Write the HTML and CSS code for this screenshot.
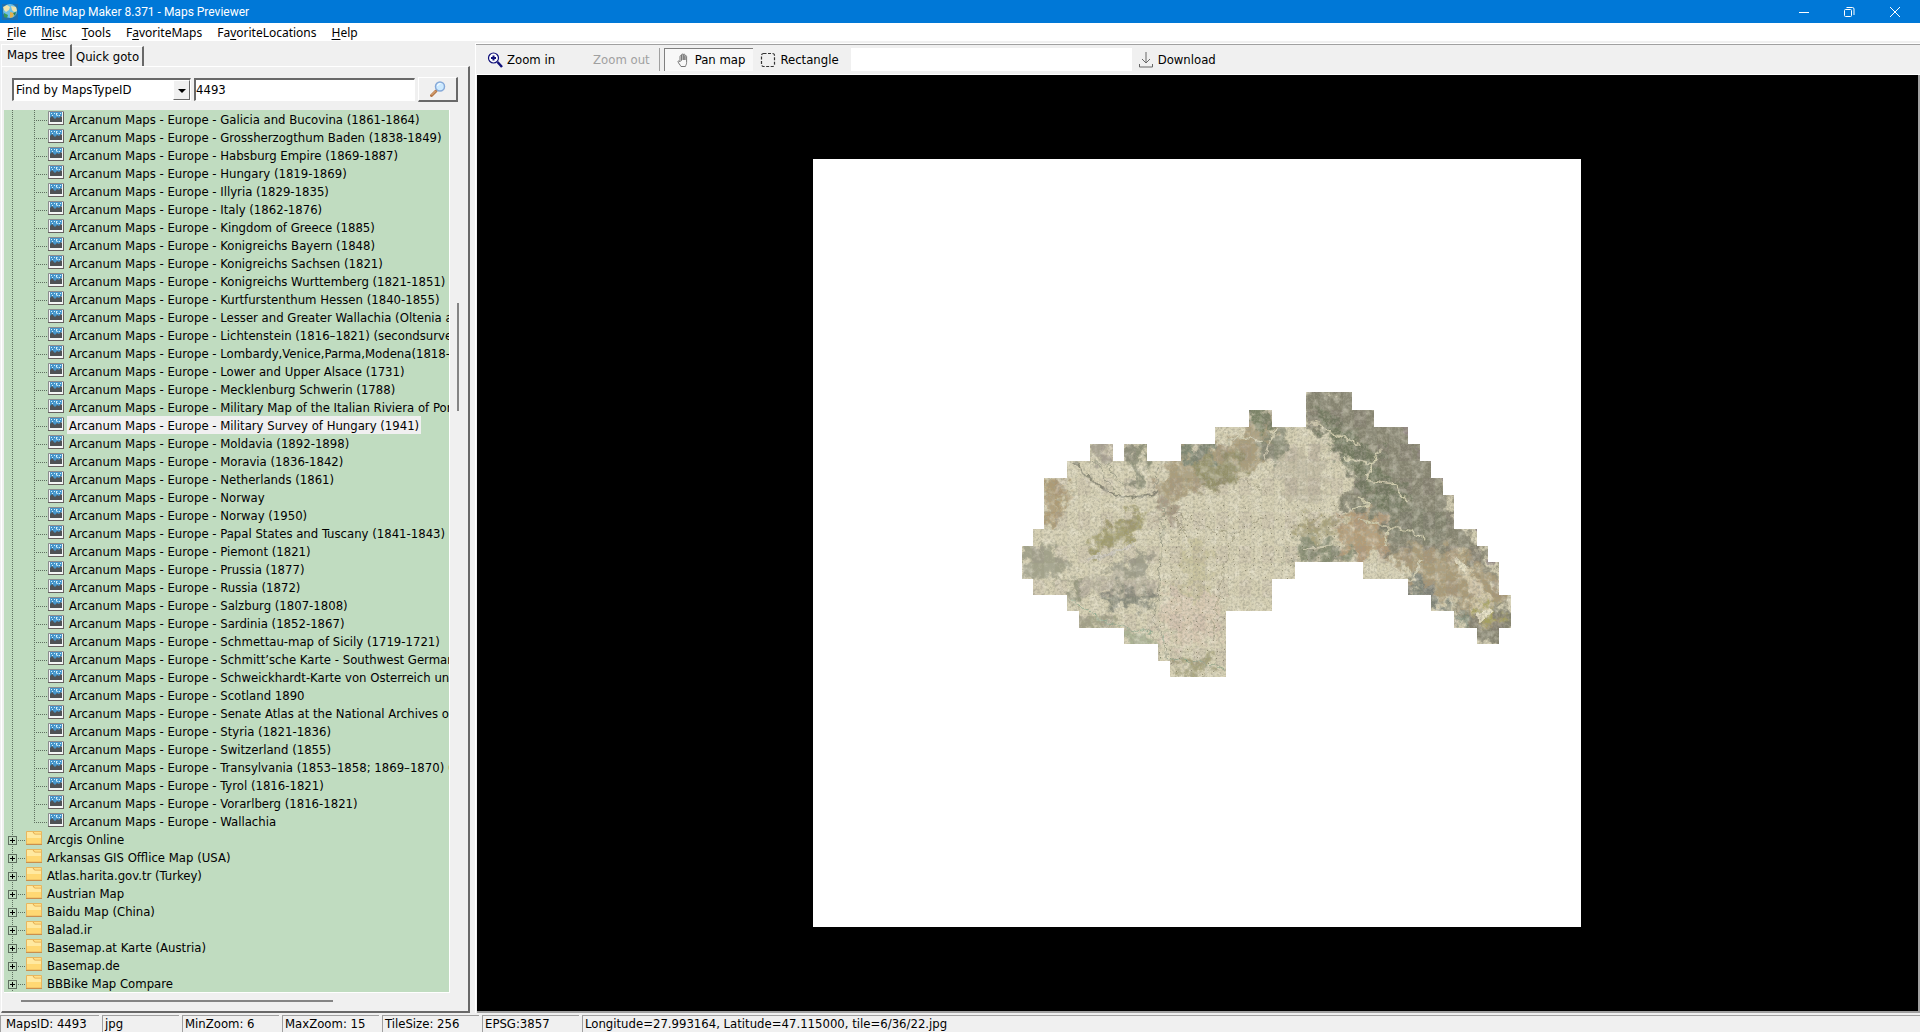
FILE: index.html
```html
<!DOCTYPE html>
<html lang="en">
<head>
    <meta charset="UTF-8">
    <meta name="viewport" content="width=device-width, initial-scale=1.0">
    <title>Offline Map Maker 8.371 - Maps Previewer</title>
    <link rel="stylesheet" href="styles.css">
</head>
<body>
    <!-- shared icons -->
    <svg class="sprite" aria-hidden="true">
        <symbol id="icon-map" viewBox="0 0 16 14">
            <rect x="0" y="0" width="16" height="14" rx="1" fill="#8b8b8e"/>
            <path d="M0 13h16v1H0zM15 1h1v12h-1z" fill="#66605f"/>
            <rect x="1" y="1" width="14" height="12" fill="#f4f6f6"/>
            <rect x="2" y="1" width="12" height="10" fill="#4796cb"/>
            <path d="M3 2h1v1H3zM6 2h1v1H6zM12 2h1v1h-1zM4 4h1v1H4zM8 2l2 0-1 1 0 1 2 1-2 0-1-1zM11 4h1v1h-1zM13 5h1v1h-1z" fill="#d5f1fb"/>
            <path d="M2 7l2-2 3 3 2-2 2 1 2-2 1 1v5H2z" fill="#505356"/>
        </symbol>
        <symbol id="icon-folder" viewBox="0 0 16 14">
            <path d="M0.500 0.500h15v12.500h-15z" fill="#ffd873" stroke="#e8b65e"/>
            <path d="M1 1h6l1.500 2H15v4H1z" fill="#ffe9a0"/>
            <path d="M7 1l1.500 2h6.500" fill="none" stroke="#e0a850"/>
            <path d="M8 1h7v1.500H9z" fill="#ffdf88"/>
            <path d="M0 13.500h16" stroke="#c98f4d"/>
        </symbol>
    </svg>

    <div class="window">
        <header class="titlebar">
            <svg class="app-icon" viewBox="0 0 16 16" aria-hidden="true">
                <rect width="16" height="16" fill="#1f6fae"/>
                <circle cx="8" cy="7" r="7" fill="#6fc0e4"/>
                <path d="M1 3l4-2 3 2-1 3-3 2-2-2zM9 2l5 1 1 4-3 1-2-2z" fill="#efe3ae"/>
                <path d="M8 8l4 1-1 4-3 1z" fill="#e4b24f"/>
                <path d="M2 9l4 2-1 3-3-1z" fill="#3c9a58"/>
                <path d="M11 9l3-1-1 4z" fill="#2c7d4a"/>
            </svg>
            <h1 class="title">Offline Map Maker 8.371 - Maps Previewer</h1>
            <div class="window-buttons">
                <button type="button" aria-label="Minimize"><svg viewBox="0 0 12 12"><path d="M1 6.500h10"/></svg></button>
                <button type="button" aria-label="Restore"><svg viewBox="0 0 12 12"><rect x="1.500" y="3.500" width="7" height="7" rx="1"/><path d="M3.500 1.500h6a1.500 1.500 0 0 1 1.500 1.500v6"/></svg></button>
                <button type="button" aria-label="Close"><svg viewBox="0 0 12 12"><path d="M1 1l10 10M11 1L1 11"/></svg></button>
            </div>
        </header>

        <nav class="menubar">
            <a href="#"><u>F</u>ile</a>
            <a href="#"><u>M</u>isc</a>
            <a href="#"><u>T</u>ools</a>
            <a href="#">F<u>a</u>voriteMaps</a>
            <a href="#">Fa<u>v</u>oriteLocations</a>
            <a href="#"><u>H</u>elp</a>
        </nav>

        <main class="workspace">
            <aside class="sidebar">
                <div class="tabs" role="tablist">
                    <button type="button" class="tab active" role="tab" aria-selected="true">Maps tree</button>
                    <button type="button" class="tab" role="tab" aria-selected="false">Quick goto</button>
                </div>
                <div class="tab-page">
                    <form class="search">
                        <div class="combo">
                            <select aria-label="Search mode">
                                <option>Find by MapsTypeID</option>
                            </select>
                            <span class="combo-arrow"></span>
                        </div>
                        <input type="text" class="search-text" aria-label="Search value" value="4493">
                        <button type="button" class="search-button" aria-label="Find">
                            <svg viewBox="0 0 16 16">
                                <path d="M1.500 14.500L6 10" stroke="#b5794a" stroke-width="3" stroke-linecap="round"/>
                                <path d="M1.500 14L5.500 10" stroke="#e8b680" stroke-width="1"/>
                                <circle cx="10" cy="5.500" r="4.500" fill="#cdeaff" stroke="#86a9d8" stroke-width="1.500"/>
                                <path d="M7.500 5a3 3 0 0 1 3-2.500" fill="none" stroke="#fff"/>
                            </svg>
                        </button>
                    </form>

                    <div class="tree-area">
                        <ul class="tree">
                            <li>
                                <ul class="branch">
                                    <li class="map"><svg><use href="#icon-map"/></svg><span>Arcanum Maps - Europe - Galicia and Bucovina (1861-1864)</span></li>
                                    <li class="map"><svg><use href="#icon-map"/></svg><span>Arcanum Maps - Europe - Grossherzogthum Baden (1838-1849)</span></li>
                                    <li class="map"><svg><use href="#icon-map"/></svg><span>Arcanum Maps - Europe - Habsburg Empire (1869-1887)</span></li>
                                    <li class="map"><svg><use href="#icon-map"/></svg><span>Arcanum Maps - Europe - Hungary (1819-1869)</span></li>
                                    <li class="map"><svg><use href="#icon-map"/></svg><span>Arcanum Maps - Europe - Illyria (1829-1835)</span></li>
                                    <li class="map"><svg><use href="#icon-map"/></svg><span>Arcanum Maps - Europe - Italy (1862-1876)</span></li>
                                    <li class="map"><svg><use href="#icon-map"/></svg><span>Arcanum Maps - Europe - Kingdom of Greece (1885)</span></li>
                                    <li class="map"><svg><use href="#icon-map"/></svg><span>Arcanum Maps - Europe - Konigreichs Bayern (1848)</span></li>
                                    <li class="map"><svg><use href="#icon-map"/></svg><span>Arcanum Maps - Europe - Konigreichs Sachsen (1821)</span></li>
                                    <li class="map"><svg><use href="#icon-map"/></svg><span>Arcanum Maps - Europe - Konigreichs Wurttemberg (1821-1851)</span></li>
                                    <li class="map"><svg><use href="#icon-map"/></svg><span>Arcanum Maps - Europe - Kurtfurstenthum Hessen (1840-1855)</span></li>
                                    <li class="map"><svg><use href="#icon-map"/></svg><span>Arcanum Maps - Europe - Lesser and Greater Wallachia (Oltenia a</span></li>
                                    <li class="map"><svg><use href="#icon-map"/></svg><span>Arcanum Maps - Europe - Lichtenstein (1816–1821) (secondsurvey</span></li>
                                    <li class="map"><svg><use href="#icon-map"/></svg><span>Arcanum Maps - Europe - Lombardy,Venice,Parma,Modena(1818-1</span></li>
                                    <li class="map"><svg><use href="#icon-map"/></svg><span>Arcanum Maps - Europe - Lower and Upper Alsace (1731)</span></li>
                                    <li class="map"><svg><use href="#icon-map"/></svg><span>Arcanum Maps - Europe - Mecklenburg Schwerin (1788)</span></li>
                                    <li class="map"><svg><use href="#icon-map"/></svg><span>Arcanum Maps - Europe - Military Map of the Italian Riviera of Pon</span></li>
                                    <li class="map selected"><svg><use href="#icon-map"/></svg><span>Arcanum Maps - Europe - Military Survey of Hungary (1941)</span></li>
                                    <li class="map"><svg><use href="#icon-map"/></svg><span>Arcanum Maps - Europe - Moldavia (1892-1898)</span></li>
                                    <li class="map"><svg><use href="#icon-map"/></svg><span>Arcanum Maps - Europe - Moravia (1836-1842)</span></li>
                                    <li class="map"><svg><use href="#icon-map"/></svg><span>Arcanum Maps - Europe - Netherlands (1861)</span></li>
                                    <li class="map"><svg><use href="#icon-map"/></svg><span>Arcanum Maps - Europe - Norway</span></li>
                                    <li class="map"><svg><use href="#icon-map"/></svg><span>Arcanum Maps - Europe - Norway (1950)</span></li>
                                    <li class="map"><svg><use href="#icon-map"/></svg><span>Arcanum Maps - Europe - Papal States and Tuscany (1841-1843)</span></li>
                                    <li class="map"><svg><use href="#icon-map"/></svg><span>Arcanum Maps - Europe - Piemont (1821)</span></li>
                                    <li class="map"><svg><use href="#icon-map"/></svg><span>Arcanum Maps - Europe - Prussia (1877)</span></li>
                                    <li class="map"><svg><use href="#icon-map"/></svg><span>Arcanum Maps - Europe - Russia (1872)</span></li>
                                    <li class="map"><svg><use href="#icon-map"/></svg><span>Arcanum Maps - Europe - Salzburg (1807-1808)</span></li>
                                    <li class="map"><svg><use href="#icon-map"/></svg><span>Arcanum Maps - Europe - Sardinia (1852-1867)</span></li>
                                    <li class="map"><svg><use href="#icon-map"/></svg><span>Arcanum Maps - Europe - Schmettau-map of Sicily (1719-1721)</span></li>
                                    <li class="map"><svg><use href="#icon-map"/></svg><span>Arcanum Maps - Europe - Schmitt’sche Karte - Southwest German</span></li>
                                    <li class="map"><svg><use href="#icon-map"/></svg><span>Arcanum Maps - Europe - Schweickhardt-Karte von Osterreich unte</span></li>
                                    <li class="map"><svg><use href="#icon-map"/></svg><span>Arcanum Maps - Europe - Scotland 1890</span></li>
                                    <li class="map"><svg><use href="#icon-map"/></svg><span>Arcanum Maps - Europe - Senate Atlas at the National Archives of</span></li>
                                    <li class="map"><svg><use href="#icon-map"/></svg><span>Arcanum Maps - Europe - Styria (1821-1836)</span></li>
                                    <li class="map"><svg><use href="#icon-map"/></svg><span>Arcanum Maps - Europe - Switzerland (1855)</span></li>
                                    <li class="map"><svg><use href="#icon-map"/></svg><span>Arcanum Maps - Europe - Transylvania (1853–1858; 1869–1870) (</span></li>
                                    <li class="map"><svg><use href="#icon-map"/></svg><span>Arcanum Maps - Europe - Tyrol (1816-1821)</span></li>
                                    <li class="map"><svg><use href="#icon-map"/></svg><span>Arcanum Maps - Europe - Vorarlberg (1816-1821)</span></li>
                                    <li class="map"><svg><use href="#icon-map"/></svg><span>Arcanum Maps - Europe - Wallachia</span></li>
                                </ul>
                            </li>
                            <li class="folder"><button type="button" class="expand" aria-label="Expand"></button><svg><use href="#icon-folder"/></svg><span>Arcgis Online</span></li>
                            <li class="folder"><button type="button" class="expand" aria-label="Expand"></button><svg><use href="#icon-folder"/></svg><span>Arkansas GIS Offlice Map (USA)</span></li>
                            <li class="folder"><button type="button" class="expand" aria-label="Expand"></button><svg><use href="#icon-folder"/></svg><span>Atlas.harita.gov.tr (Turkey)</span></li>
                            <li class="folder"><button type="button" class="expand" aria-label="Expand"></button><svg><use href="#icon-folder"/></svg><span>Austrian Map</span></li>
                            <li class="folder"><button type="button" class="expand" aria-label="Expand"></button><svg><use href="#icon-folder"/></svg><span>Baidu Map (China)</span></li>
                            <li class="folder"><button type="button" class="expand" aria-label="Expand"></button><svg><use href="#icon-folder"/></svg><span>Balad.ir</span></li>
                            <li class="folder"><button type="button" class="expand" aria-label="Expand"></button><svg><use href="#icon-folder"/></svg><span>Basemap.at Karte (Austria)</span></li>
                            <li class="folder"><button type="button" class="expand" aria-label="Expand"></button><svg><use href="#icon-folder"/></svg><span>Basemap.de</span></li>
                            <li class="folder"><button type="button" class="expand" aria-label="Expand"></button><svg><use href="#icon-folder"/></svg><span>BBBike Map Compare</span></li>
                        </ul>
                        <div class="scroll-v"><div class="thumb"></div></div>
                        <div class="scroll-h"><div class="thumb"></div></div>
                    </div>
                </div>
            </aside>

            <section class="viewer">
                <div class="toolbar">
                    <button type="button" class="tool zoom-in">
                        <svg viewBox="0 0 16 16"><circle cx="6.500" cy="6" r="5" fill="#fff" stroke="#10107a" stroke-width="1.200"/><path d="M4 6h5M6.500 3.500v5" stroke="#10107a" stroke-width="2"/><path d="M10.500 10l4.500 5" stroke="#10107a" stroke-width="2.500"/></svg>
                        Zoom in
                    </button>
                    <button type="button" class="tool zoom-out" disabled>Zoom out</button>
                    <button type="button" class="tool pan active">
                        <svg viewBox="0 0 16 16"><path d="M6 14.500c-1-2-2.500-3-3-5 0-1 1.500-.8 2 .5V4.500c0-1.200 1.500-1.200 1.500 0v4V3c0-1.300 1.700-1.300 1.700 0V8V3c0-1.300 1.700-1.300 1.700 0V8V4.500c0-1.200 1.700-1.200 1.700 0v6c0 2-.8 2.500-1.200 4z" fill="#f8f8f8" stroke="#777"/></svg>
                        Pan map
                    </button>
                    <button type="button" class="tool rectangle">
                        <svg viewBox="0 0 16 16"><rect x="1.500" y="1.500" width="13" height="13" rx="2" fill="none" stroke="#333" stroke-width="1.200" stroke-dasharray="3 1.500"/></svg>
                        Rectangle
                    </button>
                    <input type="text" class="tool-text" aria-label="Rectangle bounds">
                    <button type="button" class="tool download">
                        <svg viewBox="0 0 16 16"><path d="M8 0v11M4 7l4 4 4-4M1.500 12v3h13v-3" fill="none" stroke="#666"/></svg>
                        Download
                    </button>
                </div>

                <div class="canvas">
                    <svg class="map-image" viewBox="0 0 768 768" role="img" aria-label="Military Survey of Hungary (1941)">
                        <defs>
                            <clipPath id="coverage">
                                <path d="M209 387H220V370H231V319H254V302H277V285H300V302H311V285H334V302H368V285H402V268H436V251H459V268H493V233H539V251H561V268H595V285H607V302H618V319H630V336H641V370H664V387H675V403H686V436H698V469H686V485H664V469H641V452H618V436H595V420H550V403H482V420H459V452H413V518H357V502H345V485H311V469H266V452H254V436H220V420H209Z"/>
                            </clipPath>
                            <filter id="soft" x="-20%" y="-20%" width="140%" height="140%">
                                <feGaussianBlur stdDeviation="2" result="b"/>
                                <feTurbulence type="fractalNoise" baseFrequency="0.09" numOctaves="5" seed="7" result="n"/>
                                <feDisplacementMap in="b" in2="n" scale="38" xChannelSelector="R" yChannelSelector="G"/>
                            </filter>
                            <filter id="rough" x="-10%" y="-10%" width="120%" height="120%">
                                <feTurbulence type="fractalNoise" baseFrequency="0.12" numOctaves="3" seed="3" result="n"/>
                                <feDisplacementMap in="SourceGraphic" in2="n" scale="9" xChannelSelector="R" yChannelSelector="G"/>
                            </filter>
                            <filter id="grain" x="0" y="0" width="100%" height="100%">
                                <feTurbulence type="fractalNoise" baseFrequency="0.4" numOctaves="3" seed="11"/>
                                <feColorMatrix values="0 0 0 0 0.36  0 0 0 0 0.35  0 0 0 0 0.26  2.2 1.8 0 0 -1.75"/>
                            </filter>
                            <filter id="light" x="0" y="0" width="100%" height="100%">
                                <feTurbulence type="fractalNoise" baseFrequency="0.14" numOctaves="5" seed="23"/>
                                <feColorMatrix values="0 0 0 0 0.9  0 0 0 0 0.87  0 0 0 0 0.74  0 3 0 0 -1.4"/>
                            </filter>
                            <pattern id="sheets" width="23" height="34" patternUnits="userSpaceOnUse" x="208" y="234">
                                <rect width="11" height="17" fill="#fff" opacity="0.060"/>
                                <rect x="11" y="17" width="12" height="17" fill="#705070" opacity="0.060"/>
                                <path d="M0 0H23M0 0V34" stroke="#8a8874" stroke-width="0.500" opacity="0.250"/>
                            </pattern>
                            <pattern id="villages" width="37" height="31" patternUnits="userSpaceOnUse">
                                <path d="M3 5h1v1H3zM14 2h1v1h-1zM25 8h1v1h-1zM33 3h1v1h-1zM8 15h1v1H8zM19 19h1v1h-1zM30 16h1v1h-1zM4 25h1v1H4zM13 28h1v1h-1zM24 26h1v1h-1zM34 27h1v1h-1z" fill="#6f6a50"/>
                            </pattern>
                        </defs>
                        <g clip-path="url(#coverage)">
                            <rect x="200" y="225" width="505" height="300" fill="#d6d0b4"/>
                            <g filter="url(#soft)">
                                <!-- eastern range -->
                                <path d="M488 228H560L620 300L645 365L670 390L700 460V490H660L640 440L600 400L575 395L530 340L545 310L520 280L492 262Z" fill="#85836f"/>
                                <path d="M520 220L570 240L630 320L690 410L710 440L720 360L640 270Z" fill="#928784"/>
                                <path d="M500 245L560 290L600 345L590 375L550 330L520 290Z" fill="#727961"/>
                                <path d="M540 340L620 350L640 375L590 380L540 360Z" fill="#7e806c"/>
                                <path d="M527 354H572V395L530 402Z" fill="#b39c78"/>
                                <path d="M575 390H650L690 430L680 470L640 440L600 425Z" fill="#a99a78"/>
                                <path d="M485 378L530 385L540 404H482Z" fill="#868c72"/>
                                <path d="M480 365L520 358L525 375L490 380Z" fill="#a9a27c"/>
                                <path d="M595 412L640 450H600Z" fill="#7e8377"/>
                                <path d="M640 395L660 410L680 450L665 465L655 430Z" fill="#d3c8a8"/>
                                <path d="M664 445H686V462H664Z" fill="#a5a05e"/>
                                <path d="M645 455H656V470H645Z" fill="#7e8a78"/>
                                <!-- north -->
                                <path d="M368 285H402L440 268V250H462V290L430 315L375 330L350 345L345 320Z" fill="#aa9d7b"/>
                                <path d="M385 300L432 298L425 325L385 332Z" fill="#94916b"/>
                                <path d="M436 248H460V270H436Z" fill="#7b8468"/>
                                <path d="M368 285H402V300H368Z" fill="#7d8672"/>
                                <path d="M449 275H475L470 300H450Z" fill="#888b75"/>
                                <path d="M311 285H334L330 325H322Z" fill="#8c8f78"/>
                                <path d="M277 285H300V300H277Z" fill="#a9a393"/>
                                <path d="M462 300L510 280L515 340L475 345Z" fill="#c4bda5"/>
                                <!-- west -->
                                <path d="M231 319H254V345L240 368H231Z" fill="#ad9b76"/>
                                <path d="M285 375L320 355L335 352L320 375L285 395L275 390Z" fill="#a09b6d"/>
                                <path d="M209 387H245L255 418H209Z" fill="#a3a38b"/>
                                <path d="M295 405L335 395L335 415L300 417Z" fill="#9c9b88"/>
                                <path d="M290 430L340 428L338 447L295 446Z" fill="#86897a"/>
                                <path d="M255 420H270V440H255Z" fill="#96977f"/>
                                <path d="M270 418H345V432H270Z" fill="#bfb9a5"/>
                                <path d="M262 455L300 462V472H262Z" fill="#a5a588"/>
                                <path d="M345 340L362 345L360 360L345 355Z" fill="#a2947e"/>
                                <path d="M370 385H395V450H370Z" fill="#c9c39f"/>
                                <path d="M350 435H405V485H350Z" fill="#d8c9b2"/>
                                <path d="M365 500H400V512H365Z" fill="#a6a27c"/>
                                <path d="M311 470L345 480V490H311Z" fill="#aab294"/>
                            </g>
                            <g filter="url(#rough)" fill="none">
                                <path d="M262 302C275 320 290 335 310 337S335 335 345 332" stroke="#878673" stroke-width="2"/>
                                <path d="M280 300L300 330M295 305L315 332M325 300L322 325M345 305L342 330M350 340L348 400L345 440L340 460L350 480L355 500" stroke="#9a9b84"/>
                                <path d="M350 345L400 372L420 375L450 360M420 375L408 420L400 480M355 350L380 385M432 320L455 335" stroke="#a6a184"/>
                                <path d="M275 400L300 394L320 385" stroke="#cfccbf" stroke-width="4"/>
                                <path d="M258 440L290 462L340 475M350 475L352 485" stroke="#93ad92"/>
                                <path d="M345 498L400 505L412 510" stroke="#94a88c"/>
                                <path d="M530 300L560 305L552 320L580 325L595 342M560 305L568 290M545 360L575 368L600 372L612 382M575 368L572 388M540 350L556 345L545 338M500 260L520 275L545 285" stroke="#cfcbaa" stroke-width="2"/>
                                <path d="M490 390L520 385M610 400L600 420L585 425M460 270L452 300M410 285L425 278L450 282M455 282L465 270" stroke="#d0ccb0" stroke-width="2"/>
                                <path d="M643 400L655 412M665 460L680 450" stroke="#e3ddc0" stroke-width="6"/>
                            </g>
                            <rect x="200" y="225" width="505" height="300" filter="url(#light)" opacity="0.400"/>
                            <rect x="200" y="225" width="505" height="300" filter="url(#grain)" opacity="0.600"/>
                            <path d="M345 345H530V420H413V518H345Z" fill="url(#villages)" opacity="0.600"/>
                            <rect x="200" y="225" width="505" height="300" fill="url(#sheets)"/>
                        </g>
                    </svg>
                </div>
            </section>
        </main>

        <footer class="statusbar">
            <span>MapsID: 4493</span>
            <span>jpg</span>
            <span>MinZoom: 6</span>
            <span>MaxZoom: 15</span>
            <span>TileSize: 256</span>
            <span>EPSG:3857</span>
            <span>Longitude=27.993164, Latitude=47.115000, tile=6/36/22.jpg</span>
        </footer>
    </div>
</body>
</html>
```

FILE: styles.css
```css
* {
    margin: 0;
    padding: 0;
    box-sizing: border-box;
}

body {
    font-family: "DejaVu Sans Condensed", "DejaVu Sans", sans-serif;
    font-size: 13px;
    line-height: 18px;
    color: #000;
    background-color: #f0f0f0;
}

button,
input,
select {
    font: inherit;
    color: inherit;
    border: none;
    border-radius: 0;
    background: none;
}

.sprite {
    display: none;
}

.window {
    display: flex;
    flex-direction: column;
    height: 100vh;
    overflow: hidden;
}

/* title bar */
.titlebar {
    display: flex;
    align-items: center;
    height: 23px;
    padding-left: 2px;
    background-color: #0078d7;
    color: #fff;
}

.app-icon {
    width: 16px;
    height: 16px;
}

.title {
    flex: 1;
    margin-left: 6px;
    font: 12px/22px Roboto, sans-serif;
}

.window-buttons {
    display: flex;
}

.window-buttons button {
    width: 45px;
    height: 20px;
}

.window-buttons button:last-child {
    width: 49px;
    padding-right: 2px;
}

.window-buttons svg {
    display: block;
    width: 12px;
    height: 12px;
    margin: 0 auto;
    fill: none;
    stroke: #fff;
}

/* menu */
.menubar {
    display: flex;
    gap: 15px;
    height: 18px;
    padding-left: 7px;
    background-color: #fff;
    font: 12px/20px "Noto Sans", sans-serif;
}

.menubar a {
    color: #000;
    text-decoration: none;
}

.menubar u {
    text-underline-offset: 2px;
}

.workspace {
    display: flex;
    flex: 1;
    min-height: 0;
}

/* left panel */
.sidebar {
    display: flex;
    flex-direction: column;
    width: 470px;
    padding: 3px 0 0 1px;
}

.tabs {
    display: flex;
    align-items: flex-end;
    height: 22px;
}

.tab {
    height: 20px;
    padding: 0 3px 0 4px;
    border-top: 1px solid #fff;
    border-right: 2px solid #696969;
}

.tab.active {
    height: 22px;
    padding: 0 5px 1px;
    border-left: 1px solid #fff;
}

.tab-page {
    display: flex;
    flex-direction: column;
    flex: 1;
    min-height: 0;
    padding: 10px 9px 0 2px;
    border: 1px solid #fff;
    border-right: 2px solid #696969;
    border-bottom: 2px solid #696969;
}

.search {
    display: flex;
    align-items: center;
    gap: 3px;
    padding: 0 1px 0 8px;
}

.combo,
.search-text {
    height: 23px;
    border: 2px solid #696969;
    border-right: 1px solid #fff;
    border-bottom: 1px solid #fff;
    background-color: #fff;
}

.combo {
    display: flex;
    position: relative;
    width: 179px;
}

.combo select {
    appearance: none;
    width: 100%;
    padding: 0 18px 0 2px;
    outline: none;
}

.combo-arrow {
    position: absolute;
    top: 0;
    right: 0;
    width: 17px;
    height: 20px;
    border: 1px solid #fff;
    border-right-color: #696969;
    border-bottom-color: #696969;
    background-color: #f0f0f0;
    pointer-events: none;
}

.combo-arrow::after {
    content: "";
    position: absolute;
    top: 8px;
    left: 4px;
    border: 4px solid transparent;
    border-top-color: #000;
    border-bottom: none;
}

.search-text {
    flex: 1;
    min-width: 0;
    padding-bottom: 2px;
}

.search-button {
    width: 40px;
    height: 25px;
    border: 1px solid #fff;
    border-right: 2px solid #696969;
    border-bottom: 2px solid #696969;
}

.search-button svg {
    display: block;
    width: 16px;
    height: 16px;
    margin: 0 auto;
    fill: none;
}

/* tree */
.tree-area {
    display: grid;
    grid-template-columns: 1fr 9px;
    grid-template-rows: 1fr 18px;
    flex: 1;
    min-height: 0;
    margin-top: 8px;
}

.tree {
    min-width: 0;
    overflow: hidden;
    list-style: none;
    border-right: 1px solid #fff;
    border-bottom: 1px solid #fff;
    background: repeating-linear-gradient(#5f6f60 0 1px, transparent 1px 2px) 8px 0 / 1px 100% no-repeat #c0dcc0;
}

.branch {
    list-style: none;
    margin-left: 30px;
    background: repeating-linear-gradient(#5f6f60 0 1px, transparent 1px 2px) 0 0 / 1px calc(100% - 8px) no-repeat;
}

.map,
.folder {
    display: flex;
    align-items: center;
    height: 18px;
    white-space: nowrap;
    background: repeating-linear-gradient(90deg, #5f6f60 0 1px, transparent 1px 2px) 0 10px / 13px 1px no-repeat;
}

.map {
    padding-left: 14px;
}

.folder {
    padding-left: 4px;
    background-position: 14px 10px;
    background-size: 7px 1px;
}

.tree svg {
    flex: none;
    width: 16px;
    height: 14px;
    margin-bottom: 2px;
}

.tree span {
    margin-left: 3px;
    padding: 2px 2px 0;
    line-height: 16px;
}

.selected span {
    background-color: #f0f0f0;
}

.expand {
    width: 9px;
    height: 9px;
    margin: 3px 9px 0 0;
    border: 1px solid #5f6f60;
    background:
        linear-gradient(#000, #000) center / 5px 1px no-repeat,
        linear-gradient(#000, #000) center / 1px 5px no-repeat,
        #c0dcc0;
}

.scroll-v .thumb {
    width: 2px;
    height: 108px;
    margin: 193px 0 0 7px;
    background-color: #858585;
}

.scroll-h .thumb {
    width: 70%;
    height: 2px;
    margin: 7px 0 0 17px;
    background-color: #858585;
}

/* right side */
.viewer {
    display: flex;
    flex-direction: column;
    flex: 1;
    min-width: 0;
    margin: 2px 0 0 5px;
    border-top: 1px solid #fff;
    border-left: 1px solid #fff;
}

.toolbar {
    display: flex;
    align-items: center;
    height: 31px;
    border-top: 1px solid #a0a0a0;
    border-bottom: 1px solid #fff;
}

.tool {
    display: flex;
    align-items: center;
    gap: 4px;
    height: 23px;
}

.tool svg {
    width: 16px;
    height: 16px;
}

.zoom-in {
    margin-left: 11px;
}

.zoom-out {
    margin-left: 38px;
    padding-right: 9px;
    border-right: 1px solid #a0a0a0;
    color: #a0a0a0;
}

.pan {
    margin: 0 7px 0 4px;
    padding: 0 8px 0 10px;
    border-top: 1px solid #808080;
    border-left: 1px solid #808080;
    background-color: #f8f8f8;
}

.tool-text {
    width: 281px;
    height: 23px;
    margin: 0 6px 0 12px;
    background-color: #fff;
}

.canvas {
    display: flex;
    align-items: center;
    justify-content: center;
    flex: 1;
    min-height: 0;
    margin-left: 1px;
    padding-right: 1px;
    border-right: 2px solid #a0a0a0;
    border-bottom: 2px solid #a0a0a0;
    background-color: #000;
}

.map-image {
    width: 768px;
    height: 768px;
    background-color: #fff;
}

/* status bar */
.statusbar {
    display: grid;
    grid-template-columns: 99px 77px repeat(4, 97px) 1fr;
    gap: 3px;
    height: 19px;
    padding-top: 2px;
}

.statusbar span {
    padding-left: 2px;
    border-top: 1px solid #a0a0a0;
    border-left: 1px solid #a0a0a0;
    line-height: 16px;
    white-space: nowrap;
}

.statusbar span:first-child {
    padding-left: 5px;
}
```
